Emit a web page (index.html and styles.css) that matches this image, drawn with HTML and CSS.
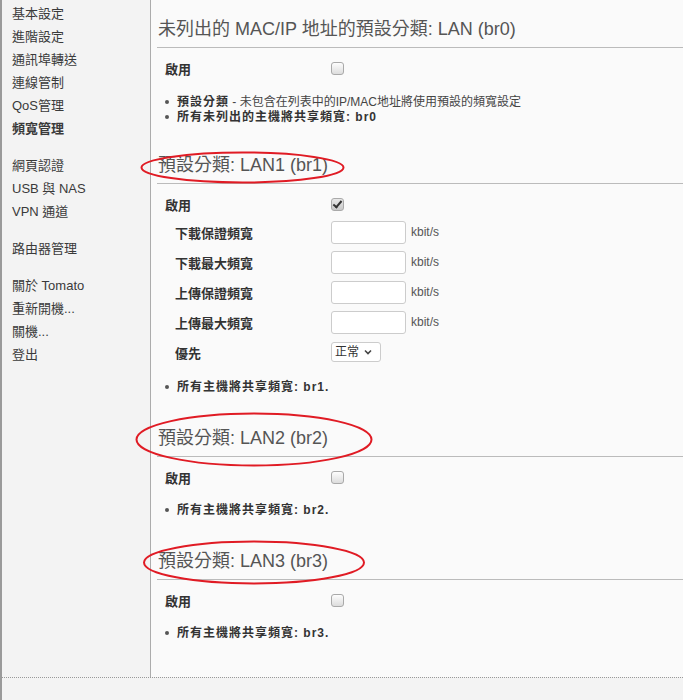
FILE: index.html
```html
<!DOCTYPE html>
<html>
    <head>
        <meta charset="utf-8">
        <link rel="stylesheet" href="styles.css">
    </head>
    <body>
        <div class="layout">
            <div class="nav">
                <ul class="nav__group">
                    <li>基本設定</li>
                    <li>進階設定</li>
                    <li>通訊埠轉送</li>
                    <li>連線管制</li>
                    <li>QoS管理</li>
                    <li class="nav__current">頻寬管理</li>
                </ul>
                <ul class="nav__group">
                    <li>網頁認證</li>
                    <li>USB 與 NAS</li>
                    <li>VPN 通道</li>
                </ul>
                <ul class="nav__group">
                    <li>路由器管理</li>
                </ul>
                <ul class="nav__group">
                    <li>關於 Tomato</li>
                    <li>重新開機...</li>
                    <li>關機...</li>
                    <li>登出</li>
                </ul>
            </div>

            <div class="content">
                <div class="section section--first">
                    <h2 class="section__title">未列出的 MAC/IP 地址的預設分類: LAN (br0)</h2>
                    <div class="form">
                        <div class="form__row form__row--head">
                            <span class="form__label">啟用</span>
                            <span><input type="checkbox" class="check"></span>
                        </div>
                    </div>
                    <ul class="notes">
                        <li><b>預設分類</b> - 未包含在列表中的IP/MAC地址將使用預設的頻寬設定</li>
                        <li><b>所有未列出的主機將共享頻寬: br0</b></li>
                    </ul>
                </div>

                <div class="section">
                    <h2 class="section__title">預設分類: LAN1 (br1)
                        <svg class="mark mark--one" width="205" height="33" viewBox="0 0 205 33"><ellipse cx="102.5" cy="16.5" rx="101" ry="15" /></svg>
                    </h2>
                    <div class="form">
                        <div class="form__row form__row--head">
                            <span class="form__label">啟用</span>
                            <span><input type="checkbox" class="check" checked></span>
                        </div>
                        <div class="form__row">
                            <span class="form__label form__label--sub">下載保證頻寬</span>
                            <span><input type="text" class="field"><span class="unit">kbit/s</span></span>
                        </div>
                        <div class="form__row">
                            <span class="form__label form__label--sub">下載最大頻寬</span>
                            <span><input type="text" class="field"><span class="unit">kbit/s</span></span>
                        </div>
                        <div class="form__row">
                            <span class="form__label form__label--sub">上傳保證頻寬</span>
                            <span><input type="text" class="field"><span class="unit">kbit/s</span></span>
                        </div>
                        <div class="form__row">
                            <span class="form__label form__label--sub">上傳最大頻寬</span>
                            <span><input type="text" class="field"><span class="unit">kbit/s</span></span>
                        </div>
                        <div class="form__row">
                            <span class="form__label form__label--sub">優先</span>
                            <span class="picker">
                                <select class="picker__select"><option>正常</option></select>
                                <svg class="picker__arrow" width="8" height="6" viewBox="0 0 8 6"><path d="M1 1.5 L4 4.5 L7 1.5" /></svg>
                            </span>
                        </div>
                    </div>
                    <ul class="notes">
                        <li><b>所有主機將共享頻寬: br1.</b></li>
                    </ul>
                </div>

                <div class="section">
                    <h2 class="section__title">預設分類: LAN2 (br2)
                        <svg class="mark mark--two" width="238" height="55" viewBox="0 0 238 55"><ellipse cx="119" cy="27.5" rx="117.5" ry="26" /></svg>
                    </h2>
                    <div class="form">
                        <div class="form__row form__row--head">
                            <span class="form__label">啟用</span>
                            <span><input type="checkbox" class="check"></span>
                        </div>
                    </div>
                    <ul class="notes">
                        <li><b>所有主機將共享頻寬: br2.</b></li>
                    </ul>
                </div>

                <div class="section">
                    <h2 class="section__title">預設分類: LAN3 (br3)
                        <svg class="mark mark--three" width="222" height="45" viewBox="0 0 222 45"><ellipse cx="111" cy="22.5" rx="110" ry="21" /></svg>
                    </h2>
                    <div class="form">
                        <div class="form__row form__row--head">
                            <span class="form__label">啟用</span>
                            <span><input type="checkbox" class="check"></span>
                        </div>
                    </div>
                    <ul class="notes">
                        <li><b>所有主機將共享頻寬: br3.</b></li>
                    </ul>
                </div>
            </div>
        </div>
        <div class="footer"></div>
    </body>
</html>
```

FILE: styles.css
```css
* {
    box-sizing: border-box;
}

body, html {
    margin: 0;
    padding: 0;
}

body {
    font-family: "Liberation Sans", "Noto Sans CJK TC", sans-serif;
    font-size: 13px;
    color: #333;
    background-color: #f3f3f3;
    border-left: 2px solid #9a9a9a;
    min-height: 700px;
}

ul {
    margin: 0;
    padding: 0;
    list-style: none;
}

.layout {
    display: flex;
    min-height: 677px;
}

/* left menu */

.nav {
    width: 149px;
    flex-shrink: 0;
    padding: 2px 0 0 10px;
    border-right: 1px solid #acacac;
    background-color: #f3f3f3;
}

.nav__group {
    margin-bottom: 14px;
}

.nav__group li {
    line-height: 23px;
    height: 23px;
    color: #3a3a3a;
    white-space: nowrap;
}

.nav__current {
    font-weight: bold;
}

/* main */

.content {
    flex: 1;
    padding: 17px 0 0 6px;
    background-color: #fafafa;
}

.section__title {
    position: relative;
    margin: 0;
    padding: 0 0 6px 1px;
    font-size: 18px;
    font-weight: normal;
    line-height: 24px;
    height: 31px;
    color: #555;
    border-bottom: 1px solid #bbb;
}

.mark {
    position: absolute;
    overflow: visible;
}

.mark ellipse {
    fill: none;
    stroke: #e01b24;
    stroke-width: 2;
}

.mark--one {
    left: -17px;
    top: -2px;
}

.mark--two {
    left: -22px;
    top: -14px;
}

.mark--three {
    left: -14px;
    top: -9px;
}

.form {
    margin-top: 7px;
    padding-left: 8px;
}

.form__row {
    display: grid;
    grid-template-columns: 166px auto;
    align-items: center;
    height: 30px;
}

.form__row--head {
    height: 26px;
}

.form__label {
    font-weight: bold;
    color: #333;
    white-space: nowrap;
}

.form__label--sub {
    padding-left: 10px;
}

.check {
    -webkit-appearance: none;
    appearance: none;
    position: relative;
    display: block;
    margin: 0;
    width: 13px;
    height: 13px;
    border: 1px solid #a9a9a9;
    border-radius: 3px;
    background: linear-gradient(#fdfdfd, #dcdcdc);
}

.check:checked {
    background: linear-gradient(#e8e8e8, #c8c8c8);
}

.check:checked::after {
    content: "";
    position: absolute;
    left: 3px;
    top: 0px;
    width: 3px;
    height: 7px;
    border: solid #333;
    border-width: 0 2px 2px 0;
    transform: rotate(40deg);
}

.field {
    width: 75px;
    height: 23px;
    margin: 0;
    border: 1px solid #ccc;
    border-radius: 3px;
    background-color: #fff;
    vertical-align: middle;
}

.unit {
    margin-left: 5px;
    font-size: 12px;
    color: #555;
    vertical-align: middle;
}

.picker {
    position: relative;
    display: inline-block;
    width: 50px;
    height: 20px;
}

.picker__select {
    -webkit-appearance: none;
    appearance: none;
    width: 50px;
    height: 20px;
    margin: 0;
    padding: 0 0 0 3px;
    font-family: inherit;
    font-size: 12px;
    color: #333;
    border: 1px solid #ccc;
    border-radius: 3px;
    background-color: #fff;
}

.picker__arrow {
    position: absolute;
    right: 9px;
    top: 7px;
    pointer-events: none;
}

.picker__arrow path {
    fill: none;
    stroke: #444;
    stroke-width: 1.6;
}

.notes {
    margin: 13px 0 31px 8px;
    font-size: 12px;
}

.section--first .notes {
    margin-top: 14px;
    margin-bottom: 28px;
}

.notes li {
    line-height: 15px;
    height: 15px;
    color: #444;
    white-space: nowrap;
}

.notes li::before {
    content: "";
    display: inline-block;
    width: 4px;
    height: 4px;
    margin: 0 8px 2px 0;
    border-radius: 50%;
    background-color: #555;
    vertical-align: middle;
}

.notes b {
    color: #333;
    letter-spacing: 1px;
}

.footer {
    height: 23px;
    border-top: 1px dotted #999;
}
```
